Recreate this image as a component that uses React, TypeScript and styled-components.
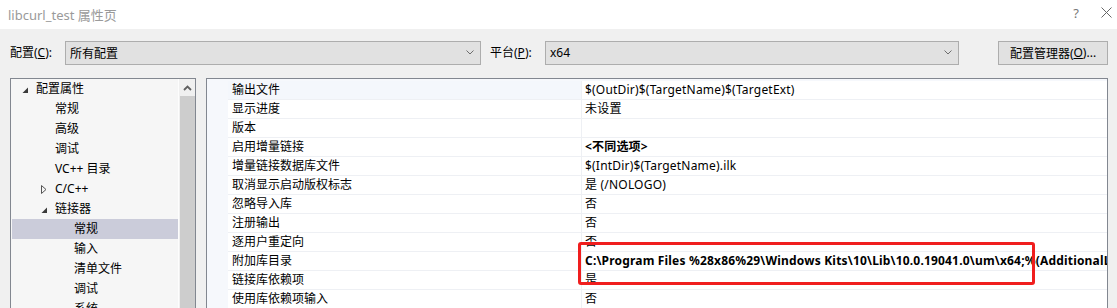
import React from "react";
import styled, { createGlobalStyle } from "styled-components";

type TreeItem = {
  label: string;
  level: number;
  arrow?: "open" | "closed";
  selected?: boolean;
};

type PropRow = {
  name: string;
  value: string;
  bold?: boolean;
};

const treeItems: TreeItem[] = [
  { label: "配置属性", level: 0, arrow: "open" },
  { label: "常规", level: 1 },
  { label: "高级", level: 1 },
  { label: "调试", level: 1 },
  { label: "VC++ 目录", level: 1 },
  { label: "C/C++", level: 1, arrow: "closed" },
  { label: "链接器", level: 1, arrow: "open" },
  { label: "常规", level: 2, selected: true },
  { label: "输入", level: 2 },
  { label: "清单文件", level: 2 },
  { label: "调试", level: 2 },
  { label: "系统", level: 2 },
];

const propRows: PropRow[] = [
  { name: "输出文件", value: "$(OutDir)$(TargetName)$(TargetExt)" },
  { name: "显示进度", value: "未设置" },
  { name: "版本", value: "" },
  { name: "启用增量链接", value: "<不同选项>", bold: true },
  { name: "增量链接数据库文件", value: "$(IntDir)$(TargetName).ilk" },
  { name: "取消显示启动版权标志", value: "是 (/NOLOGO)" },
  { name: "忽略导入库", value: "否" },
  { name: "注册输出", value: "否" },
  { name: "逐用户重定向", value: "否" },
  {
    name: "附加库目录",
    value:
      "C:\\Program Files %28x86%29\\Windows Kits\\10\\Lib\\10.0.19041.0\\um\\x64;%(AdditionalLibraryDirectories)",
    bold: true,
  },
  { name: "链接库依赖项", value: "是" },
  { name: "使用库依赖项输入", value: "否" },
];

const GlobalStyle = createGlobalStyle`
  html, body {
    margin: 0;
    padding: 0;
  }
  body {
    background: #f0f0f0;
    font-family: "Noto Sans", "Noto Sans CJK SC", sans-serif;
    font-size: 12px;
    color: #000;
  }
`;

const Window = styled.div`
  width: 1117px;
  height: 308px;
  overflow: hidden;
  background: #f0f0f0;
  display: flex;
  flex-direction: column;
`;

const TitleBar = styled.div`
  height: 29px;
  flex: none;
  background: #fff;
  display: flex;
  align-items: center;
  padding-left: 8px;
`;

const Title = styled.div`
  flex: 1;
  color: #9a9a9a;
  font-size: 13px;
`;

const TitleButton = styled.div`
  width: 30px;
  height: 29px;
  display: flex;
  align-items: center;
  justify-content: center;
  color: #777;
  font-size: 13px;
  padding-bottom: 4px;
  box-sizing: border-box;

  &:last-child {
    margin-right: -4px;
  }
`;

const Toolbar = styled.div`
  flex: none;
  display: flex;
  align-items: center;
  height: 24px;
  margin: 12px 0 0 10px;
`;

const FieldLabel = styled.label<{ $gap?: number }>`
  width: 55px;
  margin-left: ${(p) => p.$gap ?? 0}px;
  white-space: nowrap;
  padding-bottom: 2px;
`;

const Combo = styled.div<{ $width: number }>`
  width: ${(p) => p.$width}px;
  height: 24px;
  box-sizing: border-box;
  border: 1px solid #adadad;
  background: #e1e1e1;
  display: flex;
  align-items: center;
  padding: 0 6px 1px 4px;

  span {
    flex: 1;
  }
`;

const Button = styled.div`
  width: 110px;
  height: 24px;
  margin-left: 39px;
  box-sizing: border-box;
  border: 1px solid #adadad;
  background: #e1e1e1;
  display: flex;
  align-items: center;
  justify-content: center;
  padding-bottom: 1px;
`;

const Main = styled.div`
  flex: none;
  display: flex;
  gap: 10px;
  margin: 13px 0 0 10px;
`;

const TreePanel = styled.div`
  width: 186px;
  height: 260px;
  box-sizing: border-box;
  border: 1px solid #828790;
  background: #f6f6f6;
  display: flex;
`;

const TreeList = styled.div`
  flex: 1;
  padding-left: 1px;
  border-right: 1px solid #fdfdfd;
`;

const TreeRow = styled.div<{ $level: number; $selected?: boolean }>`
  height: 20px;
  display: flex;
  align-items: center;
  padding-left: ${(p) => 8 + p.$level * 19}px;
  background: ${(p) => (p.$selected ? "#cbccda" : "transparent")};
  white-space: nowrap;

  span {
    padding-bottom: 2px;
  }
`;

const ArrowSlot = styled.div`
  width: 16px;
  height: 20px;
  flex: none;
  display: flex;
  align-items: center;
  padding-left: 2px;
  box-sizing: border-box;
`;

const ScrollBar = styled.div`
  width: 16px;
  flex: none;
  background: #f0f0f0;
  display: flex;
  flex-direction: column;
`;

const ScrollArrow = styled.div`
  height: 17px;
  display: flex;
  align-items: center;
  justify-content: center;
`;

const ScrollThumb = styled.div`
  flex: 1;
  background: #cdcdcd;
  margin: 0 0 0 1px;
`;

const GridPanel = styled.div`
  position: relative;
  width: 902px;
  height: 260px;
  box-sizing: border-box;
  border: 1px solid #828790;
  background: #f6f8fc;
  padding: 2px 0 0 21px;
  overflow: hidden;
`;

const PropLine = styled.div`
  display: grid;
  grid-template-columns: 354px 1fr;
  height: 19px;
  box-sizing: border-box;
  border-bottom: 1px solid #eef0f4;
  background: #fff;
  white-space: nowrap;
`;

const NameCell = styled.div<{ $tinted?: boolean }>`
  padding: 0 0 0 4px;
  border-right: 1px solid #eef0f4;
  background: ${(p) => (p.$tinted ? "#f4f7fc" : "#fff")};
  line-height: 18px;
`;

const ValueCell = styled.div<{ $bold?: boolean }>`
  padding-left: 3px;
  font-weight: ${(p) => (p.$bold ? 700 : 400)};
  letter-spacing: ${(p) => (p.$bold ? 0.18 : 0.2)}px;
  overflow: hidden;
  line-height: 18px;
`;

const Annotation = styled.div`
  position: absolute;
  left: 371px;
  top: 163px;
  width: 457px;
  height: 43px;
  box-sizing: border-box;
  border: 3px solid #f01e1e;
  border-radius: 3px;
  pointer-events: none;
`;

const Chevron = () => (
  <svg width="8" height="5" viewBox="0 0 8 5">
    <polyline points="0.5,0.5 4,4 7.5,0.5" fill="none" stroke="#6d6d6d" strokeWidth="1" />
  </svg>
);

const TreeArrow = ({ kind }: { kind: "open" | "closed" }) =>
  kind === "open" ? (
    <svg width="7" height="7" viewBox="0 0 7 7" style={{ marginTop: 3 }}>
      <polygon points="6,0.5 6,6 0.5,6" fill="#3a3a3a" />
    </svg>
  ) : (
    <svg width="6" height="9" viewBox="0 0 6 9">
      <polygon points="0.5,0.5 5,4.5 0.5,8.5" fill="none" stroke="#555" strokeWidth="1" />
    </svg>
  );

export default function App() {
  return (
    <>
      <GlobalStyle />
      <Window>
        <TitleBar>
          <Title>libcurl_test 属性页</Title>
          <TitleButton>?</TitleButton>
          <TitleButton>
            <svg width="11" height="11" viewBox="0 0 11 11">
              <path d="M0.5 0.5 L10.5 10.5 M10.5 0.5 L0.5 10.5" stroke="#666" strokeWidth="1" />
            </svg>
          </TitleButton>
        </TitleBar>

        <Toolbar>
          <FieldLabel>
            配置(<u>C</u>):
          </FieldLabel>
          <Combo $width={416}>
            <span>所有配置</span>
            <Chevron />
          </Combo>
          <FieldLabel $gap={9}>
            平台(<u>P</u>):
          </FieldLabel>
          <Combo $width={414}>
            <span>x64</span>
            <Chevron />
          </Combo>
          <Button>
            配置管理器(<u>O</u>)...
          </Button>
        </Toolbar>

        <Main>
          <TreePanel>
            <TreeList>
              {treeItems.map((item, i) => (
                <TreeRow key={i} $level={item.level} $selected={item.selected}>
                  <ArrowSlot>{item.arrow && <TreeArrow kind={item.arrow} />}</ArrowSlot>
                  <span>{item.label}</span>
                </TreeRow>
              ))}
            </TreeList>
            <ScrollBar>
              <ScrollArrow>
                <svg width="9" height="6" viewBox="0 0 9 6">
                  <polyline points="1,5 4.5,1.5 8,5" fill="none" stroke="#606060" strokeWidth="1.8" />
                </svg>
              </ScrollArrow>
              <ScrollThumb />
            </ScrollBar>
          </TreePanel>

          <GridPanel>
            {propRows.map((row, i) => (
              <PropLine key={i}>
                <NameCell $tinted={i === 0}>{row.name}</NameCell>
                <ValueCell $bold={row.bold}>{row.value}</ValueCell>
              </PropLine>
            ))}
            <Annotation />
          </GridPanel>
        </Main>
      </Window>
    </>
  );
}
